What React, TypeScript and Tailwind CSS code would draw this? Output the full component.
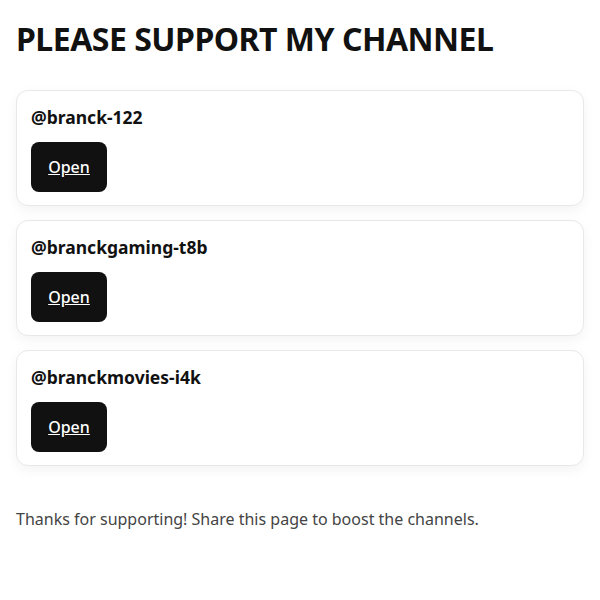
const channels = ['@branck-122', '@branckgaming-t8b', '@branckmovies-i4k']

export default function App() {
  return (
    <div className="min-h-screen bg-white px-4 pt-[18px] text-[#111] [font-family:'Noto_Sans',sans-serif]">
      <h1 className="text-[32px] font-bold leading-[42px] tracking-[-0.5px]">PLEASE SUPPORT MY CHANNEL</h1>
      <div className="mt-[30px] flex flex-col gap-[14px]">
        {channels.map((name) => (
          <div
            key={name}
            className="flex flex-col items-start gap-3 rounded-xl border border-[#e8e8e8] bg-white px-[14px] pb-[13px] pt-[13px] shadow-[0_4px_12px_rgba(0,0,0,0.05)]"
          >
            <div className="text-[17.5px] font-bold leading-[26px]">{name}</div>
            <a
              href="#"
              className="flex h-[50px] w-[76px] items-center justify-center rounded-lg bg-[#111] text-[16px] font-medium text-white underline"
            >
              Open
            </a>
          </div>
        ))}
      </div>
      <p className="mt-[41px] text-[16px] text-[#444]">Thanks for supporting! Share this page to boost the channels.</p>
    </div>
  )
}
